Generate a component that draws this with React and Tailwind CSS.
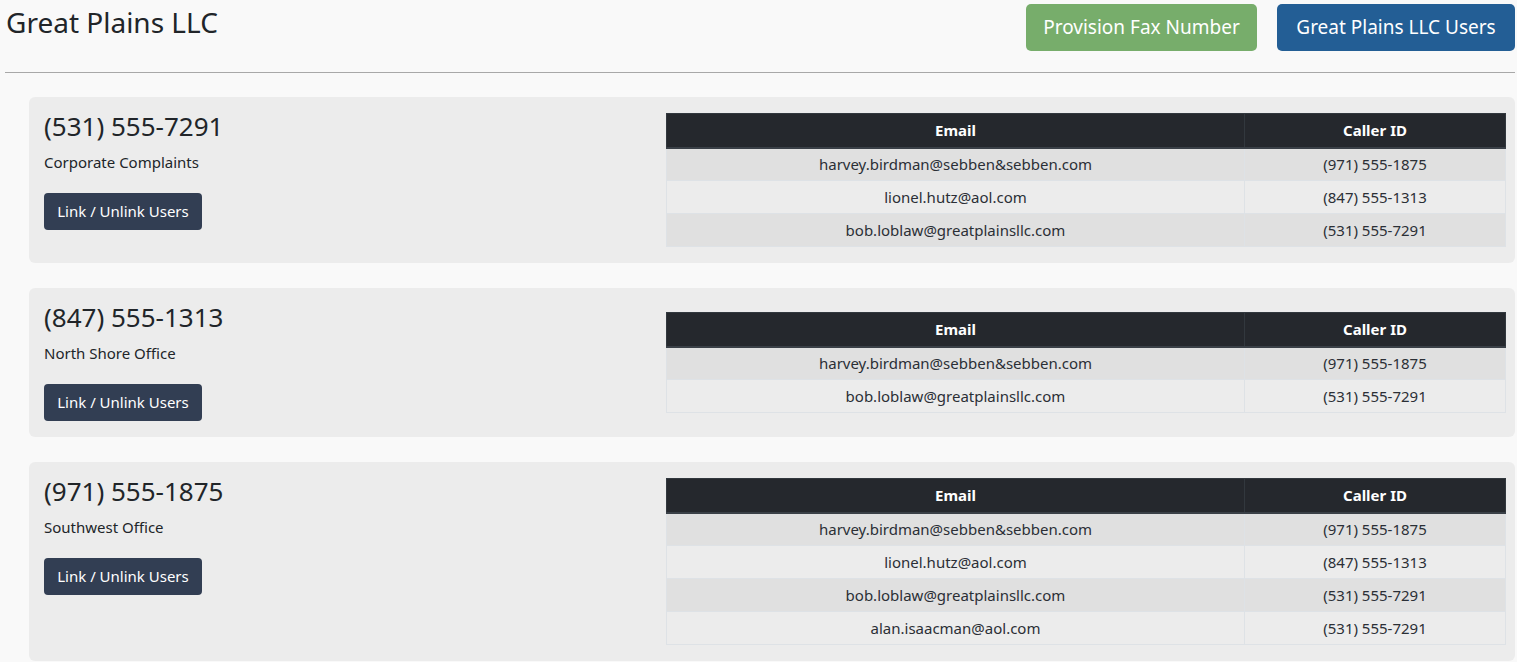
import React from 'react';

// fax numbers and the users linked to each one
const faxNumbers = [
    {
        number: '(531) 555-7291',
        label: 'Corporate Complaints',
        users: [
            { email: 'harvey.birdman@sebben&sebben.com', callerId: '(971) 555-1875' },
            { email: 'lionel.hutz@aol.com', callerId: '(847) 555-1313' },
            { email: 'bob.loblaw@greatplainsllc.com', callerId: '(531) 555-7291' },
        ],
    },
    {
        number: '(847) 555-1313',
        label: 'North Shore Office',
        users: [
            { email: 'harvey.birdman@sebben&sebben.com', callerId: '(971) 555-1875' },
            { email: 'bob.loblaw@greatplainsllc.com', callerId: '(531) 555-7291' },
        ],
    },
    {
        number: '(971) 555-1875',
        label: 'Southwest Office',
        users: [
            { email: 'harvey.birdman@sebben&sebben.com', callerId: '(971) 555-1875' },
            { email: 'lionel.hutz@aol.com', callerId: '(847) 555-1313' },
            { email: 'bob.loblaw@greatplainsllc.com', callerId: '(531) 555-7291' },
            { email: 'alan.isaacman@aol.com', callerId: '(531) 555-7291' },
        ],
    },
];

const UsersTable = ({ users }) => (
    <table className="w-full border-collapse text-[15px] text-[#2b2f36]">
        <thead>
            <tr className="bg-[#25282d] text-white">
                <th className="h-[34px] w-[578px] border border-[#32383e] border-b-2 border-b-[#3a4047] font-bold leading-[22px]">Email</th>
                <th className="h-[34px] border border-[#32383e] border-b-2 border-b-[#3a4047] font-bold leading-[22px]">Caller ID</th>
            </tr>
        </thead>
        <tbody>
            {users.map((u, i) => (
                <tr key={i} className={i % 2 === 0 ? 'bg-[#e0e0e0]' : 'bg-[#ececec]'}>
                    <td className="h-[33px] border border-[#dee2e6] text-center leading-[22px]">{u.email}</td>
                    <td className="h-[33px] border border-[#dee2e6] text-center leading-[22px]">{u.callerId}</td>
                </tr>
            ))}
        </tbody>
    </table>
);

const FaxCard = ({ fax }) => (
    <div className="flex items-center rounded-md bg-[#ececec] pl-[15px] pr-[9px] py-4">
        <div className="w-[622px] flex-none self-start">
            <div className="text-[26px] leading-[27px] text-[#212529]">{fax.number}</div>
            <div className="mt-[11px] text-[15px] leading-[22px] text-[#212529]">{fax.label}</div>
            <button className="mt-[20px] h-[37px] w-[158px] rounded-[4px] bg-[#323e53] text-[15px] text-white">
                Link / Unlink Users
            </button>
        </div>
        <div className="flex-1">
            <UsersTable users={fax.users} />
        </div>
    </div>
);

const App = () => {
    return (
        <div className="min-h-[662px] w-full overflow-hidden bg-[#f9f9f9] pl-[5px] pr-[2px] font-['Noto_Sans','Lato',sans-serif] text-[#212529]">
            <div className="flex items-start justify-between">
                <h1 className="mt-[4px] pl-px text-[28px] leading-[36px] font-normal">Great Plains LLC</h1>
                <div className="mt-1 flex gap-5">
                    <button className="h-[47px] w-[231px] rounded-[5px] bg-[#77ad6b] text-[19px] text-white">
                        Provision Fax Number
                    </button>
                    <button className="h-[47px] w-[238px] rounded-[5px] bg-[#235e95] text-[19px] text-white">
                        Great Plains LLC Users
                    </button>
                </div>
            </div>
            <hr className="mt-[21px] border-t border-[#a8a8a8]" />
            <div className="ml-6 mt-6 flex flex-col gap-[25px]">
                {faxNumbers.map((fax) => (
                    <FaxCard key={fax.number} fax={fax} />
                ))}
            </div>
        </div>
    );
};

export default App;
